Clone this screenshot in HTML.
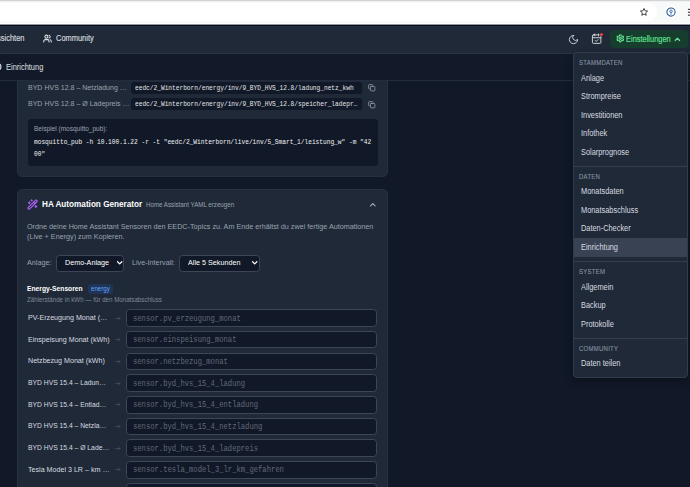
<!DOCTYPE html>
<html lang="de">
<head>
<meta charset="utf-8">
<title>EEDC – Einrichtung</title>
<style>
*{box-sizing:border-box;margin:0;padding:0}
html,body{width:690px;height:487px;overflow:hidden;background:#111827}
body{position:relative;font-family:"Liberation Sans",sans-serif;font-size:8.4px;color:#d1d5db}
.abs{position:absolute}
.t{position:absolute;white-space:nowrap;transform-origin:0 50%;transform:scaleX(.89);line-height:12px;height:12px}
.md{-webkit-text-stroke:.18px currentColor}
.m{font-family:"Liberation Mono",monospace;font-size:7.2px;transform:scaleX(.859)}
svg{position:absolute;overflow:visible}
/* browser chrome */
#chrome{left:0;top:0;width:690px;height:25px;background:#f8f9f9;border-bottom:1px solid #94979d}
#chrome .sep{left:0;top:23px;width:690px;height:1px;background:#fff}
#chrome .line{left:0;top:0;width:690px;height:1px;background:#d2d3d5}
#chrome .line2{left:0;top:1px;width:690px;height:1px;background:#f0f1f2}
#chrome .url{left:0;top:2.500px;width:656.800px;height:18.500px;background:#fff;border-radius:0 9.250px 9.250px 0}
/* nav */
#nav{left:0;top:25px;width:690px;height:29px;background:#1f2937;border-top:1px solid #030919;border-bottom:1px solid #293447;box-shadow:inset 0 1px 0 #252f40}
#subnav{left:0;top:54px;width:690px;height:27px;background:#121929;border-bottom:1px solid #232d3f}
.card{background:#1f2937;border-radius:5px;border:1px solid #253041}
#card1{left:17.100px;top:80px;width:370.500px;height:96.700px;border-radius:0 0 5px 5px}
#card2{left:17.100px;top:188.600px;width:370.500px;height:320px}
.code{background:#111827;border-radius:2.5px}
.inp{background:#111827;border:1px solid #3c4657;border-radius:3.5px;left:126.300px;width:251.100px;height:17.600px}
.lb{left:27.600px;color:#d9dce1;font-size:8px;margin-top:-.4px}
.lb.by{transform:scaleX(.845)}
.ar{left:115px;color:#566071;font-size:8.6px;transform:scaleX(1)}
.m.ph{left:133.300px;color:#616a79;font-size:8.4px;transform:scaleX(.858)}
.sel{background:#111827;border:1px solid #3c4657;border-radius:3.5px;height:17px;margin-top:.3px}
#menu{left:572.800px;top:52.300px;width:114.800px;height:325.300px;background:#1f2937;border:1px solid #303b4c;border-radius:4px;box-shadow:0 4px 8px rgba(0,0,0,.3)}
.mh{font-size:6.6px;letter-spacing:.3px;color:#8a93a2;transform:scaleX(.905);margin-top:.4px;-webkit-text-stroke:.1px currentColor}
.mi{color:#d8dbe1;transform:scaleX(.882);margin-top:-.3px}
.div{left:573.800px;width:112.800px;height:1px;background:#333e4f}
</style>
</head>
<body>

<!-- browser chrome -->
<div id="chrome" class="abs">
  <div class="abs url"></div>
  <div class="abs line"></div>
  <div class="abs line2"></div>
  <div class="abs sep"></div>
  <svg style="left:639.400px;top:7.100px" width="10" height="10" viewBox="0 0 24 24" fill="none" stroke="#202124" stroke-width="2" stroke-linejoin="round"><path d="M12 3.5l2.6 5.6 6 .7-4.5 4.1 1.2 6-5.3-3-5.3 3 1.2-6L3.4 9.800l6-.7z"/></svg>
  <div class="abs" style="left:664.500px;top:6.200px;width:12px;height:12px;border-radius:50%;background:#fff"></div>
  <svg style="left:665.500px;top:7.200px" width="10" height="10" viewBox="0 0 20 20" fill="none" stroke="#2a5a98" stroke-width="2.100"><circle cx="10" cy="10" r="8.200"/><path d="M10 11v5.800" stroke="#9dbbdc" stroke-width="3.200"/><circle cx="10" cy="8.600" r="2.500" fill="#fff" stroke-width="1.700"/></svg>
  <div class="abs" style="left:687px;top:7.500px;width:6px;height:9.600px;border-radius:2px;background:#fff"></div>
  <svg style="left:686px;top:7px" width="4" height="10" viewBox="0 0 4 10" fill="#2a2c2f"><rect x="1.900" y="1.800" width="3" height="1.100"/><rect x="1.900" y="4.700" width="3" height="1.100"/><rect x="1.900" y="7.600" width="3" height="1.100"/></svg>
</div>

<!-- card 1: MQTT topics (scrolled) -->
<div id="card1" class="abs card"></div>
<span class="t" style="left:27.500px;top:81.500px;color:#9ca3af;font-size:7.9px">BYD HVS 12.8 – Netzladung …</span>
<div class="abs code" style="left:131px;top:82px;width:230.5px;height:11.6px"></div>
<span class="t m" style="left:134.8px;top:82px;color:#e5e7eb">eedc/2_Winterborn/energy/inv/9_BYD_HVS_12.8/ladung_netz_kwh</span>
<svg class="cp" style="left:368px;top:84px" width="7.5" height="7.5" viewBox="0 0 24 24" fill="none" stroke="#9ca3af" stroke-width="2.4" stroke-linecap="round" stroke-linejoin="round"><rect x="8" y="8" width="14" height="14" rx="2"/><path d="M4 16c-1.100 0-2-.9-2-2V4c0-1.100.9-2 2-2h10c1.100 0 2 .9 2 2"/></svg>
<span class="t" style="left:27.500px;top:98.100px;color:#9ca3af;font-size:7.9px">BYD HVS 12.8 – Ø Ladepreis …</span>
<div class="abs code" style="left:131px;top:98.400px;width:230.5px;height:11.6px"></div>
<span class="t m" style="left:134.8px;top:98.300px;color:#e5e7eb">eedc/2_Winterborn/energy/inv/9_BYD_HVS_12.8/speicher_ladepr…</span>
<svg class="cp" style="left:368px;top:100.800px" width="7.5" height="7.5" viewBox="0 0 24 24" fill="none" stroke="#9ca3af" stroke-width="2.4" stroke-linecap="round" stroke-linejoin="round"><rect x="8" y="8" width="14" height="14" rx="2"/><path d="M4 16c-1.100 0-2-.9-2-2V4c0-1.100.9-2 2-2h10c1.100 0 2 .9 2 2"/></svg>

<div class="abs code" style="left:27.500px;top:118.900px;width:350.200px;height:47px;border-radius:3.5px"></div>
<span class="t" style="left:34px;top:122.500px;color:#9ca3af;font-size:7.3px">Beispiel (mosquitto_pub):</span>
<span class="t m" style="left:34px;top:135.500px;color:#f3f4f6">mosquitto_pub -h 10.100.1.22 -r -t "eedc/2_Winterborn/live/inv/5_Smart_1/leistung_w" -m "42</span>
<span class="t m" style="left:34px;top:147.500px;color:#f3f4f6">00"</span>

<!-- card 2: HA Automation Generator -->
<div id="card2" class="abs card"></div>
<svg style="left:27.400px;top:199.300px" width="11.200" height="11.200" viewBox="0 0 24 24" fill="none" stroke="#ae63f7" stroke-width="2.400" stroke-linecap="round" stroke-linejoin="round"><path d="m21.640 3.640-1.280-1.280a1.210 1.210 0 0 0-1.720 0L2.360 18.640a1.210 1.210 0 0 0 0 1.720l1.280 1.280a1.200 1.200 0 0 0 1.720 0L21.640 5.360a1.200 1.200 0 0 0 0-1.720"/><path d="m14 7 3 3"/><path d="M5 6v4"/><path d="M19 14v4"/><path d="M10 2v2"/><path d="M7 8H3"/><path d="M21 16h-4"/><path d="M11 3H9"/></svg>
<span class="t" style="left:42px;top:198.200px;color:#fff;font-weight:700;font-size:9px;transform:scaleX(.908)">HA Automation Generator</span>
<span class="t" style="left:146px;top:199px;color:#9ca3af;font-size:6.5px;transform:scaleX(.95)">Home Assistant YAML erzeugen</span>
<svg style="left:367.600px;top:200.300px" width="9.600" height="9.600" viewBox="0 0 24 24" fill="none" stroke="#bcc1ca" stroke-width="2.600" stroke-linecap="round" stroke-linejoin="round"><path d="m18 15-6-6-6 6"/></svg>

<span class="t" style="left:27.400px;top:220.900px;color:#9ca3af;font-size:8.1px">Ordne deine Home Assistant Sensoren den EEDC-Topics zu. Am Ende erhältst du zwei fertige Automationen</span>
<span class="t" style="left:27.400px;top:230.900px;color:#9ca3af;font-size:8.1px">(Live + Energy) zum Kopieren.</span>

<span class="t" style="left:27px;top:257.100px;color:#9ca3af;font-size:8.1px">Anlage:</span>
<div class="abs sel" style="left:56.200px;top:254.400px;width:67.400px"></div>
<span class="t" style="left:64.500px;top:257.100px;color:#fff;font-size:8.1px">Demo-Anlage</span>
<svg style="left:115.500px;top:259.100px" width="7.400" height="7.400" viewBox="0 0 24 24" fill="none" stroke="#fff" stroke-width="4" stroke-linecap="round" stroke-linejoin="round"><path d="m5 9 7 7 7-7"/></svg>
<span class="t" style="left:132px;top:257.100px;color:#9ca3af;font-size:8.1px">Live-Intervall:</span>
<div class="abs sel" style="left:179.400px;top:254.400px;width:80.600px"></div>
<span class="t" style="left:188px;top:257.100px;color:#fff;font-size:8.1px">Alle 5 Sekunden</span>
<svg style="left:250.800px;top:259.100px" width="7.400" height="7.400" viewBox="0 0 24 24" fill="none" stroke="#fff" stroke-width="4" stroke-linecap="round" stroke-linejoin="round"><path d="m5 9 7 7 7-7"/></svg>

<span class="t" style="left:27px;top:283px;color:#fff;font-weight:700;font-size:7.75px;transform:scaleX(.868)">Energy-Sensoren</span>
<div class="abs" style="left:87.500px;top:284.100px;width:25.300px;height:9.800px;border-radius:2px;background:#1f3459"></div>
<span class="t" style="left:90.800px;top:283px;color:#60a5fa;font-size:6.9px">energy</span>
<span class="t" style="left:27px;top:294px;color:#808998;font-size:6.5px;transform:scaleX(.95)">Zählerstände in kWh — für den Monatsabschluss</span>
<div class="abs inp" style="top:309.20px"></div>
<span class="t lb" style="top:312.20px">PV-Erzeugung Monat (…</span>
<svg style="left:115.400px;top:315.50px" width="5.600" height="5" viewBox="0 0 11.200 10" fill="none" stroke="#4c5666" stroke-width="1.300" stroke-linecap="round" stroke-linejoin="round"><path d="M1 5h9"/><path d="M7 2l3 3-3 3"/></svg>
<span class="t m ph" style="top:312.50px">sensor.pv_erzeugung_monat</span>
<div class="abs inp" style="top:330.90px"></div>
<span class="t lb" style="top:333.90px">Einspeisung Monat (kWh)</span>
<svg style="left:115.400px;top:337.20px" width="5.600" height="5" viewBox="0 0 11.200 10" fill="none" stroke="#4c5666" stroke-width="1.300" stroke-linecap="round" stroke-linejoin="round"><path d="M1 5h9"/><path d="M7 2l3 3-3 3"/></svg>
<span class="t m ph" style="top:334.20px">sensor.einspeisung_monat</span>
<div class="abs inp" style="top:352.60px"></div>
<span class="t lb" style="top:355.60px">Netzbezug Monat (kWh)</span>
<svg style="left:115.400px;top:358.90px" width="5.600" height="5" viewBox="0 0 11.200 10" fill="none" stroke="#4c5666" stroke-width="1.300" stroke-linecap="round" stroke-linejoin="round"><path d="M1 5h9"/><path d="M7 2l3 3-3 3"/></svg>
<span class="t m ph" style="top:355.90px">sensor.netzbezug_monat</span>
<div class="abs inp" style="top:374.30px"></div>
<span class="t lb by" style="top:377.30px">BYD HVS 15.4 – Ladun…</span>
<svg style="left:115.400px;top:380.60px" width="5.600" height="5" viewBox="0 0 11.200 10" fill="none" stroke="#4c5666" stroke-width="1.300" stroke-linecap="round" stroke-linejoin="round"><path d="M1 5h9"/><path d="M7 2l3 3-3 3"/></svg>
<span class="t m ph" style="top:377.60px">sensor.byd_hvs_15_4_ladung</span>
<div class="abs inp" style="top:396.00px"></div>
<span class="t lb by" style="top:399.00px">BYD HVS 15.4 – Entlad…</span>
<svg style="left:115.400px;top:402.30px" width="5.600" height="5" viewBox="0 0 11.200 10" fill="none" stroke="#4c5666" stroke-width="1.300" stroke-linecap="round" stroke-linejoin="round"><path d="M1 5h9"/><path d="M7 2l3 3-3 3"/></svg>
<span class="t m ph" style="top:399.30px">sensor.byd_hvs_15_4_entladung</span>
<div class="abs inp" style="top:417.70px"></div>
<span class="t lb by" style="top:420.70px">BYD HVS 15.4 – Netzla…</span>
<svg style="left:115.400px;top:424.00px" width="5.600" height="5" viewBox="0 0 11.200 10" fill="none" stroke="#4c5666" stroke-width="1.300" stroke-linecap="round" stroke-linejoin="round"><path d="M1 5h9"/><path d="M7 2l3 3-3 3"/></svg>
<span class="t m ph" style="top:421.00px">sensor.byd_hvs_15_4_netzladung</span>
<div class="abs inp" style="top:439.40px"></div>
<span class="t lb by" style="top:442.40px">BYD HVS 15.4 – Ø Lade…</span>
<svg style="left:115.400px;top:445.70px" width="5.600" height="5" viewBox="0 0 11.200 10" fill="none" stroke="#4c5666" stroke-width="1.300" stroke-linecap="round" stroke-linejoin="round"><path d="M1 5h9"/><path d="M7 2l3 3-3 3"/></svg>
<span class="t m ph" style="top:442.70px">sensor.byd_hvs_15_4_ladepreis</span>
<div class="abs inp" style="top:461.10px"></div>
<span class="t lb" style="top:464.10px">Tesla Model 3 LR – km …</span>
<svg style="left:115.400px;top:467.40px" width="5.600" height="5" viewBox="0 0 11.200 10" fill="none" stroke="#4c5666" stroke-width="1.300" stroke-linecap="round" stroke-linejoin="round"><path d="M1 5h9"/><path d="M7 2l3 3-3 3"/></svg>
<span class="t m ph" style="top:464.40px">sensor.tesla_model_3_lr_km_gefahren</span>
<div class="abs inp" style="top:482.80px"></div>

<!-- top nav -->
<div id="nav" class="abs"></div>
<span class="t md" style="left:-11.700px;top:32px;color:#d1d5db">Aussichten</span>
<svg style="left:42.500px;top:33.800px" width="9" height="9" viewBox="0 0 24 24" fill="none" stroke="#dde0e5" stroke-width="2.800" stroke-linecap="round" stroke-linejoin="round"><path d="M16 21v-2a4 4 0 0 0-4-4H6a4 4 0 0 0-4 4v2"/><circle cx="9" cy="7" r="4"/><path d="M22 21v-2a4 4 0 0 0-3-3.870"/><path d="M16 3.130a4 4 0 0 1 0 7.750"/></svg>
<span class="t md" style="left:56px;top:32px;color:#d1d5db">Community</span>

<svg style="left:568.100px;top:33.600px" width="11" height="11" viewBox="0 0 24 24" fill="none" stroke="#cdd1d8" stroke-width="2.100" stroke-linecap="round" stroke-linejoin="round"><path d="M12 3a6 6 0 0 0 9 9 9 9 0 1 1-9-9Z"/></svg>
<svg style="left:590.900px;top:33.300px" width="11.300" height="11.300" viewBox="0 0 24 24" fill="none" stroke="#cdd1d8" stroke-width="2.100" stroke-linecap="round" stroke-linejoin="round"><path d="M8 2v4"/><path d="M16 2v4"/><rect x="3" y="4" width="18" height="18" rx="2"/><path d="M3 10h18"/><path d="m9 16 2 2 4-4"/></svg>
<div class="abs" style="left:599.500px;top:32.800px;width:3.400px;height:3.400px;border-radius:50%;background:#ef4444;box-shadow:0 0 0 .6px #1f2937"></div>

<div class="abs" style="left:610px;top:30px;width:78px;height:18px;border-radius:4px;background:#173d2f"></div>
<svg style="left:615.700px;top:34.200px" width="8.600" height="8.600" viewBox="0 0 24 24" fill="none" stroke="#66de93" stroke-width="3.100" stroke-linecap="round" stroke-linejoin="round"><path d="M12.220 2h-.440a2 2 0 0 0-2 2v.180a2 2 0 0 1-1 1.730l-.430.250a2 2 0 0 1-2 0l-.150-.080a2 2 0 0 0-2.730.730l-.220.380a2 2 0 0 0 .730 2.730l.150.100a2 2 0 0 1 1 1.720v.510a2 2 0 0 1-1 1.740l-.150.090a2 2 0 0 0-.730 2.730l.220.380a2 2 0 0 0 2.730.730l.150-.080a2 2 0 0 1 2 0l.430.250a2 2 0 0 1 1 1.730V20a2 2 0 0 0 2 2h.440a2 2 0 0 0 2-2v-.180a2 2 0 0 1 1-1.730l.430-.250a2 2 0 0 1 2 0l.150.080a2 2 0 0 0 2.730-.730l.220-.390a2 2 0 0 0-.730-2.730l-.150-.080a2 2 0 0 1-1-1.740v-.500a2 2 0 0 1 1-1.740l.150-.090a2 2 0 0 0 .730-2.730l-.220-.380a2 2 0 0 0-2.730-.730l-.150.080a2 2 0 0 1-2 0l-.430-.250a2 2 0 0 1-1-1.730V4a2 2 0 0 0-2-2z"/><circle cx="12" cy="12" r="3"/></svg>
<span class="t md" style="left:626.100px;top:32.800px;color:#5ee08d">Einstellungen</span>
<svg style="left:673px;top:34.500px" width="8.800" height="8.800" viewBox="0 0 24 24" fill="none" stroke="#66de93" stroke-width="3.300" stroke-linecap="round" stroke-linejoin="round"><path d="m18 15-6-6-6 6"/></svg>

<!-- sub nav -->
<div id="subnav" class="abs"></div>
<svg style="left:-7.300px;top:62.300px" width="9.600" height="9.600" viewBox="0 0 24 24" fill="none" stroke="#d1d5db" stroke-width="3.200"><circle cx="12" cy="12" r="7.800"/><circle cx="12" cy="12" r="2.500" stroke-width="2"/></svg>
<span class="t" style="left:6.400px;top:61px;color:#d3d7dd;-webkit-text-stroke:.08px currentColor">Einrichtung</span>


<!-- settings dropdown -->
<div id="menu" class="abs"></div>
<span class="t mh" style="left:579px;top:57px">STAMMDATEN</span>
<span class="t mi" style="left:581.300px;top:72px">Anlage</span>
<span class="t mi" style="left:581.300px;top:90.5px">Strompreise</span>
<span class="t mi" style="left:581.300px;top:109px">Investitionen</span>
<span class="t mi" style="left:581.300px;top:127.5px">Infothek</span>
<span class="t mi" style="left:581.300px;top:146px">Solarprognose</span>
<div class="abs div" style="top:166px"></div>
<span class="t mh" style="left:579px;top:170.5px">DATEN</span>
<div class="abs" style="left:573.800px;top:238.400px;width:112.800px;height:18.300px;background:#384253"></div>
<span class="t mi" style="left:581.300px;top:185.5px">Monatsdaten</span>
<span class="t mi" style="left:581.300px;top:204px">Monatsabschluss</span>
<span class="t mi" style="left:581.300px;top:222.5px">Daten-Checker</span>
<span class="t mi" style="left:581.300px;top:241px">Einrichtung</span>
<div class="abs div" style="top:261px"></div>
<span class="t mh" style="left:579px;top:265.5px">SYSTEM</span>
<span class="t mi" style="left:581.300px;top:281px">Allgemein</span>
<span class="t mi" style="left:581.300px;top:299.5px">Backup</span>
<span class="t mi" style="left:581.300px;top:318px">Protokolle</span>
<div class="abs div" style="top:338px"></div>
<span class="t mh" style="left:579px;top:342.5px">COMMUNITY</span>
<span class="t mi" style="left:581.300px;top:357.5px">Daten teilen</span>

</body>
</html>
